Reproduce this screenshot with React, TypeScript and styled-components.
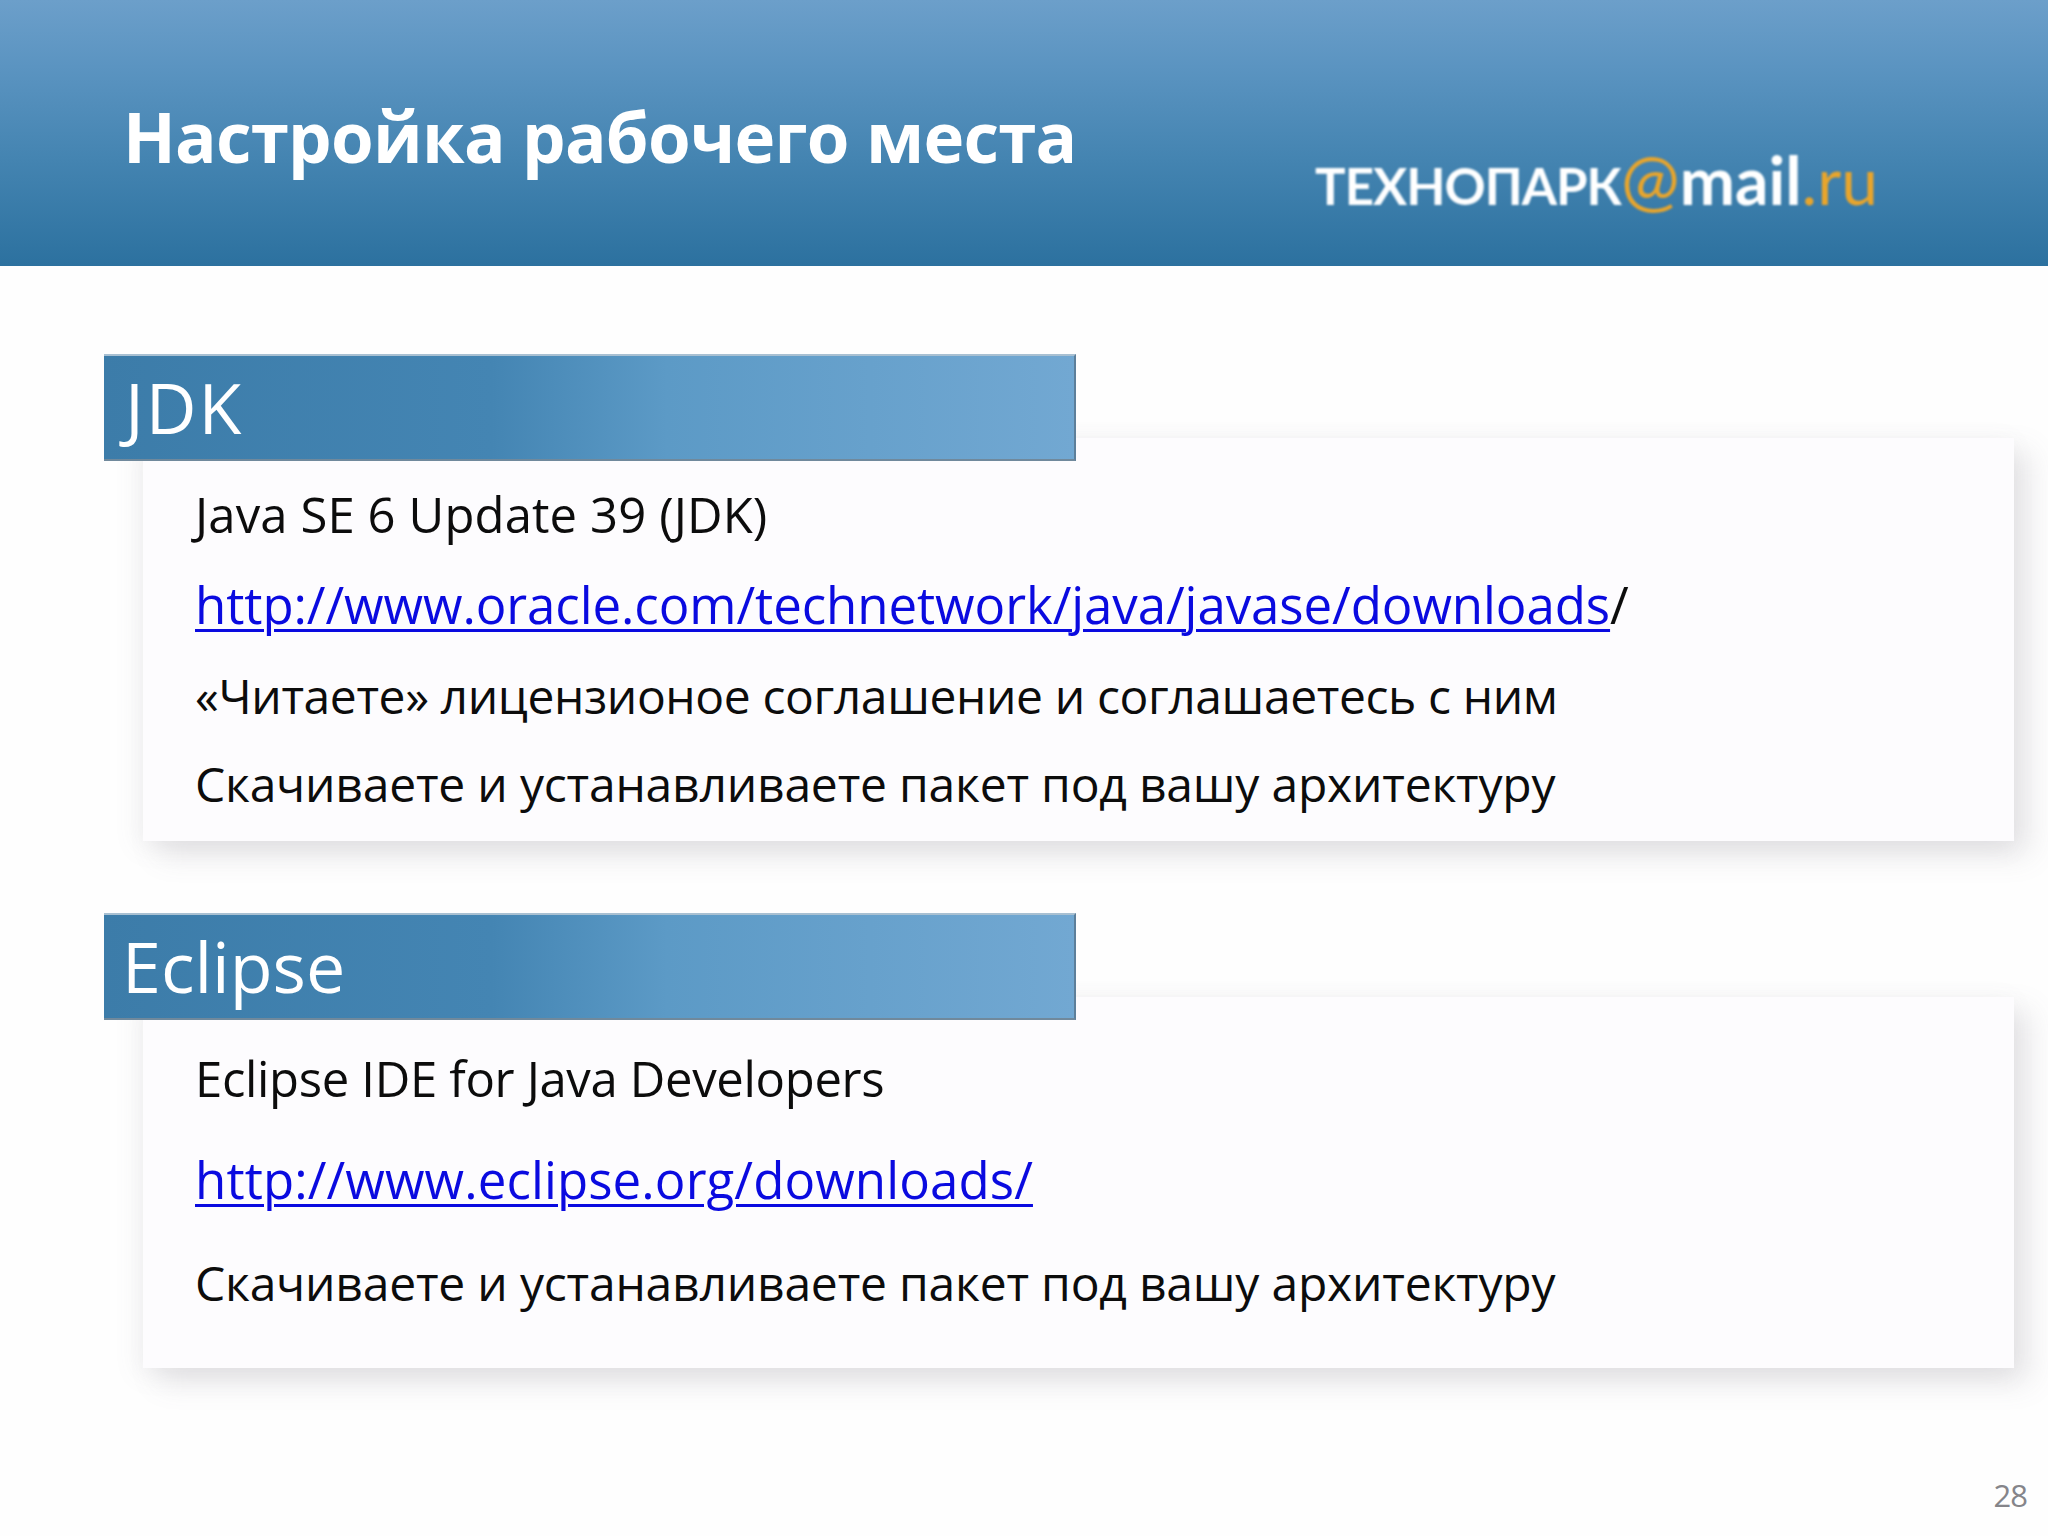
import { createGlobalStyle, styled } from "styled-components";

const GlobalStyle = createGlobalStyle`
  html, body {
    margin: 0;
    padding: 0;
    background: #ffffff;
  }
`;

const Slide = styled.div`
  width: 2048px;
  height: 1536px;
  overflow: hidden;
  display: flex;
  flex-direction: column;
  background: #fefefe;
  font-family: "Open Sans", "Noto Sans", sans-serif;
`;

const TopBar = styled.header`
  height: 266px;
  flex: none;
  box-sizing: border-box;
  padding: 89px 170px 0 123px;
  display: flex;
  justify-content: space-between;
  align-items: flex-start;
  background: linear-gradient(180deg, #6c9fca 0%, #5b94c1 25%, #4484b1 60%, #2c719f 100%);
`;

const Title = styled.h1`
  margin: 0;
  font-size: 69px;
  line-height: 94px;
  font-weight: 700;
  color: #ffffff;
  letter-spacing: -0.75px;
`;

const Logo = styled.div`
  margin-top: 49px;
  display: flex;
  align-items: baseline;
  font-family: "Lato", "Inter", sans-serif;
  font-size: 66px;
  line-height: 80px;
  font-weight: 700;
  color: #ffffff;
  white-space: nowrap;
  filter: blur(0.9px);
`;

const LogoPrefix = styled.span`
  font-size: 51px;
  letter-spacing: -1px;
`;

const LogoAt = styled.span`
  font-size: 70px;
  font-weight: 400;
  color: #e8a52c;
`;

const LogoSuffix = styled.span`
  color: #e8a52c;
  font-weight: 400;
`;

const Content = styled.main`
  padding: 88px 34px 0 104px;
  display: flex;
  flex-direction: column;
  gap: 72px;
`;

const Section = styled.section`
  display: flex;
  flex-direction: column;
`;

const SectionBar = styled.h2<{ $indent?: number; $tracking?: number }>`
  position: relative;
  z-index: 1;
  margin: 0;
  width: 972px;
  height: 107px;
  box-sizing: border-box;
  padding-left: ${(p) => p.$indent ?? 18}px;
  font-size: 70px;
  line-height: 102px;
  font-weight: 400;
  letter-spacing: ${(p) => p.$tracking ?? 0}px;
  color: #ffffff;
  background: linear-gradient(90deg, #3c7ca9 0%, #4485b3 40%, #5c9ac6 58%, #72a8d2 100%);
  border-top: 2px solid #a8c0d2;
  border-right: 2px solid #5d7f9a;
  border-bottom: 2px solid #70899c;
`;

const Card = styled.div<{ $height: number; $top: number }>`
  margin: -23px 0 0 39px;
  width: 1871px;
  height: ${(p) => p.$height}px;
  box-sizing: border-box;
  padding: ${(p) => p.$top}px 0 0 52px;
  background: #fdfcfe;
  box-shadow: 16px 14px 28px rgba(120, 115, 125, 0.16), -4px 6px 24px rgba(120, 115, 125, 0.1);
`;

const Line = styled.p<{ $height: number; $size?: number; $tracking?: number }>`
  margin: 0;
  height: ${(p) => p.$height}px;
  display: flex;
  align-items: center;
  font-size: ${(p) => p.$size ?? 48}px;
  letter-spacing: ${(p) => p.$tracking ?? -0.3}px;
  color: #0c0c0c;
  white-space: nowrap;
`;

const Anchor = styled.a`
  color: #0a0ae0;
  text-decoration: underline;
  text-decoration-thickness: 3px;
  text-underline-offset: 5px;
`;

const Footer = styled.footer`
  margin-top: auto;
  padding: 0 21px 20px 0;
  text-align: right;
  font-size: 31px;
  line-height: 42px;
  letter-spacing: -1px;
  color: #85858a;
`;

export default function App() {
  return (
    <>
      <GlobalStyle />
      <Slide>
        <TopBar>
          <Title>Настройка рабочего места</Title>
          <Logo>
            <LogoPrefix>ТЕХНОПАРК</LogoPrefix>
            <LogoAt>@</LogoAt>
            <span>mail</span>
            <LogoSuffix>.ru</LogoSuffix>
          </Logo>
        </TopBar>

        <Content>
          <Section>
            <SectionBar $indent={21} $tracking={2}>
              JDK
            </SectionBar>
            <Card $height={403} $top={34}>
              <Line $height={84} $size={49} $tracking={0.12}>
                Java SE 6 Update 39 (JDK)
              </Line>
              <Line $height={95} $size={51} $tracking={-0.08}>
                <span>
                  <Anchor href="#">http://www.oracle.com/technetwork/java/javase/downloads</Anchor>/
                </span>
              </Line>
              <Line $height={88} $tracking={-0.4}>
                «Читаете» лицензионое соглашение и соглашаетесь с ним
              </Line>
              <Line $height={88} $tracking={-0.2}>
                Скачиваете и устанавливаете пакет под вашу архитектуру
              </Line>
            </Card>
          </Section>

          <Section>
            <SectionBar>Eclipse</SectionBar>
            <Card $height={371} $top={36}>
              <Line $height={90} $size={49} $tracking={-0.33}>
                Eclipse IDE for Java Developers
              </Line>
              <Line $height={112} $size={51} $tracking={0.1}>
                <Anchor href="#">http://www.eclipse.org/downloads/</Anchor>
              </Line>
              <Line $height={94} $tracking={-0.2}>
                Скачиваете и устанавливаете пакет под вашу архитектуру
              </Line>
            </Card>
          </Section>
        </Content>

        <Footer>28</Footer>
      </Slide>
    </>
  );
}
